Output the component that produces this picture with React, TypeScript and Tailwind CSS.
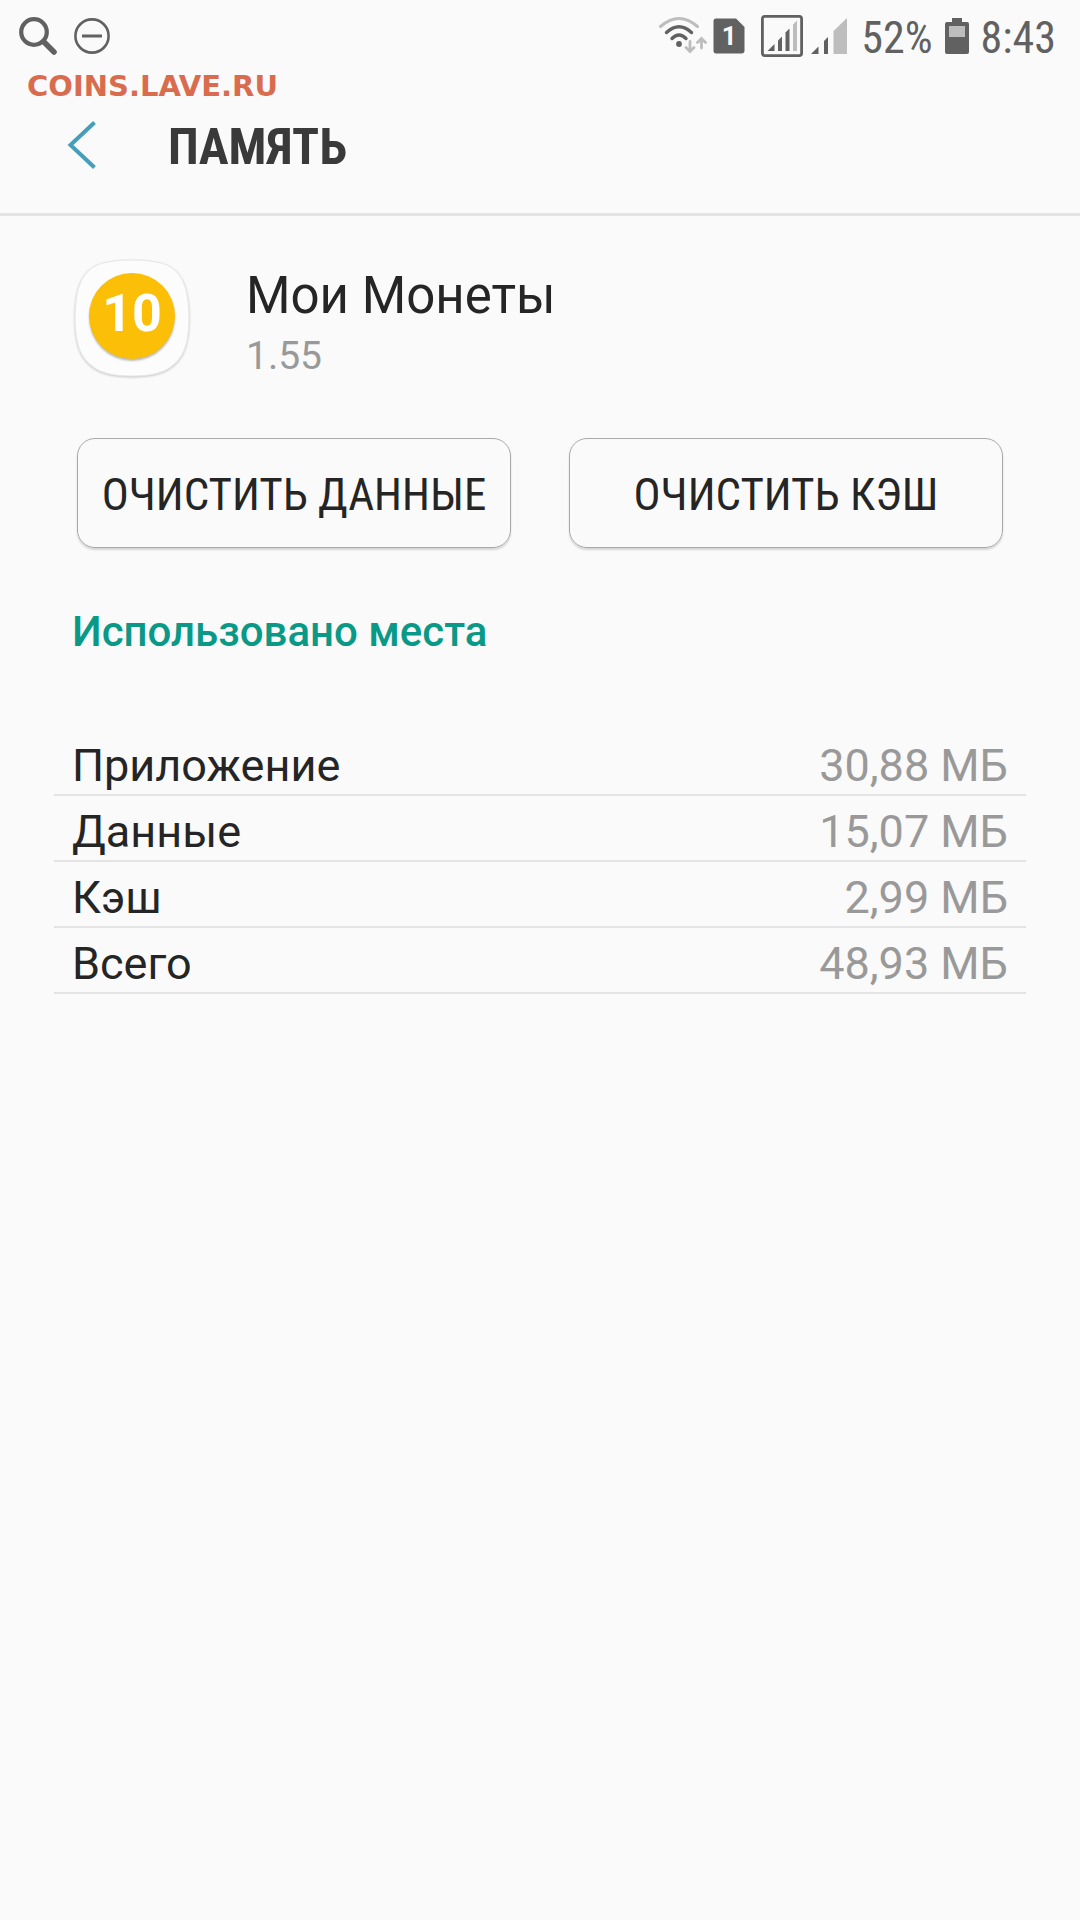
import React from 'react';

const storageItems = [
  { label: 'Приложение', value: '30,88 МБ' },
  { label: 'Данные', value: '15,07 МБ' },
  { label: 'Кэш', value: '2,99 МБ' },
  { label: 'Всего', value: '48,93 МБ' },
];

const condensed = "font-['Roboto_Condensed','Roboto',sans-serif]";

function SearchIcon() {
  return (
    <svg className="w-10 h-10" viewBox="0 0 40 40" fill="none" stroke="#616161">
      <circle cx="16" cy="16" r="12.8" strokeWidth="4.2" />
      <path d="M25.5 25.5 L36 36" strokeWidth="5.6" strokeLinecap="round" />
    </svg>
  );
}

function DoNotDisturbIcon() {
  return (
    <svg className="w-9 h-9" viewBox="0 0 36 36" fill="none" stroke="#616161">
      <circle cx="18" cy="18" r="16.6" strokeWidth="2.6" />
      <path d="M8 18 H28" strokeWidth="3" />
    </svg>
  );
}

function WifiIcon() {
  return (
    <svg className="w-12 h-10" viewBox="0 0 48 40" fill="none" strokeLinecap="round">
      <path d="M1.5 10.5 Q20 -5.5 38.5 10.5" stroke="#bdbdbd" strokeWidth="3" />
      <path d="M7.5 16.5 Q20 5 32.5 16.5" stroke="#616161" strokeWidth="3.4" />
      <path d="M13 22.5 Q20 15.5 27 22.5" stroke="#616161" strokeWidth="3.4" />
      <circle cx="20" cy="28" r="2.9" fill="#616161" />
      <path d="M31 25.5 V35 M27 31.5 L31 35.5 L35 31.5" stroke="#bdbdbd" strokeWidth="2.8" />
      <path d="M42.5 32 V23 M38.5 26.5 L42.5 22.5 L46.5 26.5" stroke="#bdbdbd" strokeWidth="2.8" />
    </svg>
  );
}

function SimIcon() {
  return (
    <span className="relative flex w-8 h-9 items-center justify-center">
      <svg className="absolute inset-0 w-8 h-9" viewBox="0 0 32 36">
        <path d="M3 0.5 H23 L31.5 9 V32.5 Q31.5 35.5 28.5 35.5 H3 Q0.5 35.5 0.5 32.5 V3.5 Q0.5 0.5 3 0.5 Z" fill="#616161" />
      </svg>
      <span className="relative font-['Roboto',sans-serif] text-[26px] leading-9 font-bold text-[#fafafa]">1</span>
    </span>
  );
}

function FramedSignalIcon() {
  return (
    <svg className="w-[42px] h-[42px]" viewBox="0 0 42 42">
      <rect x="1.4" y="1.4" width="39.2" height="39.2" rx="2.4" fill="none" stroke="#616161" strokeWidth="2.8" />
      <path d="M6.5 36 L13.5 29 V36 Z" fill="#616161" />
      <path d="M17 36 V25.5 L21 21.5 V36 Z" fill="#616161" />
      <path d="M24.5 36 V17.5 L28.5 13.5 V36 Z" fill="#616161" />
      <path d="M32 36 V9.5 L36 5.5 V36 Z" fill="#bdbdbd" />
    </svg>
  );
}

function SignalIcon() {
  return (
    <svg className="w-9 h-9" viewBox="0 0 36 36">
      <path d="M0 36 L7.5 28.5 V36 Z" fill="#616161" />
      <path d="M13 36 V23 L17 19 V36 Z" fill="#616161" />
      <path d="M22.5 36 V13 L36 0 V36 Z" fill="#bdbdbd" />
    </svg>
  );
}

function BatteryIcon() {
  return (
    <svg className="w-6 h-9" viewBox="0 0 24 36">
      <path d="M7 0 H17 V4 H22 Q24 4 24 6 V34 Q24 36 22 36 H2 Q0 36 0 34 V6 Q0 4 2 4 H7 Z" fill="#616161" />
      <rect x="4" y="8" width="16" height="11" fill="#bdbdbd" />
    </svg>
  );
}

function StatusBar() {
  return (
    <div className="flex h-[72px] items-center justify-between pl-[18px] pr-6">
      <div className="flex items-center gap-4">
        <SearchIcon />
        <DoNotDisturbIcon />
      </div>
      <div className={`flex items-center text-[44px] leading-[68px] text-[#616161] ${condensed}`}>
        <div className="flex items-center">
          <WifiIcon />
          <span className="ml-1.5"><SimIcon /></span>
          <span className="ml-4"><FramedSignalIcon /></span>
          <span className="ml-2"><SignalIcon /></span>
        </div>
        <span className="ml-[14px] pt-[3px]">52%</span>
        <span className="ml-3"><BatteryIcon /></span>
        <span className="ml-3 pt-[3px]">8:43</span>
      </div>
    </div>
  );
}

function Header() {
  return (
    <header className="flex h-36 items-center border-b-[3px] border-[#e4e4e4] pt-2 pl-[66px]">
      <button type="button" aria-label="Назад" className="mb-1 w-[102px]">
        <svg className="w-8 h-12" viewBox="0 0 32 48" fill="none" stroke="#469fba" strokeWidth="4">
          <path d="M28.5 1.5 L4.5 24 L28.5 46.5" />
        </svg>
      </button>
      <h1 className={`text-[50px] leading-[60px] font-bold text-[#3a3a3a] ${condensed}`}>ПАМЯТЬ</h1>
    </header>
  );
}

function AppIcon() {
  return (
    <div className="relative flex h-[118px] w-[116px] items-center justify-center">
      <svg className="absolute inset-0 h-full w-full overflow-visible drop-shadow-[0_1px_1px_#00000033]" viewBox="0 0 114 118" preserveAspectRatio="none">
        <path
          d="M57 1 C88 1 100 7 107 22 C112 33 113 45 113 59 C113 75 111 87 106 96 C97 111 83 117 57 117 C31 117 17 111 8 96 C3 87 1 75 1 59 C1 45 2 33 7 22 C14 7 26 1 57 1 Z"
          fill="#fcfcfc"
          stroke="#e6e6e6"
        />
      </svg>
      <span className="relative mb-1 flex h-[86px] w-[86px] items-center justify-center rounded-full bg-[#fbbf08] pb-1 text-[52px] leading-none font-bold text-white shadow-[0_2px_2px_#00000040]">
        10
      </span>
    </div>
  );
}

export default function App() {
  return (
    <div className="relative min-h-screen bg-[#fafafa] font-['Roboto',sans-serif] text-[#252525]">
      <StatusBar />
      <Header />

      {/* Watermark */}
      <a
        href="#"
        className="absolute top-[69px] left-[27px] font-['DejaVu_Sans',sans-serif] text-[29px] leading-[34px] font-bold text-[#d96c4f]"
      >
        COINS.LAVE.RU
      </a>

      <main className="px-[54px]">
        {/* App info */}
        <section className="flex items-center gap-[56px] pt-[42px] pl-5">
          <AppIcon />
          <div className="pt-2">
            <h2 className="text-[51px] leading-[60px]">Мои Монеты</h2>
            <p className="pt-2 text-[39px] leading-[44px] text-[#999999]">1.55</p>
          </div>
        </section>

        {/* Actions */}
        <div className="grid grid-cols-2 gap-[58px] px-[23px] pt-[60px]">
          {['ОЧИСТИТЬ ДАННЫЕ', 'ОЧИСТИТЬ КЭШ'].map((label) => (
            <button
              key={label}
              type="button"
              className={`h-[110px] rounded-[18px] border border-[#a8a8a8] pt-1 text-[45px] leading-[56px] whitespace-nowrap shadow-[0_2px_2px_#00000026] ${condensed}`}
            >
              {label}
            </button>
          ))}
        </div>

        {/* Storage usage */}
        <h3 className="px-[18px] pt-[59px] text-[42px] leading-[50px] font-medium text-[#0a9987]">
          Использовано места
        </h3>
        <table className="mt-[73px] w-full text-[45px] leading-[57px]">
          <tbody>
            {storageItems.map((item) => (
              <tr key={item.label} className="border-b-2 border-[#e4e4e4]">
                <th scope="row" className="pt-[7px] pl-[18px] text-left font-normal">{item.label}</th>
                <td className="pt-[7px] pr-[18px] text-right text-[#999999]">{item.value}</td>
              </tr>
            ))}
          </tbody>
        </table>
      </main>
    </div>
  );
}
